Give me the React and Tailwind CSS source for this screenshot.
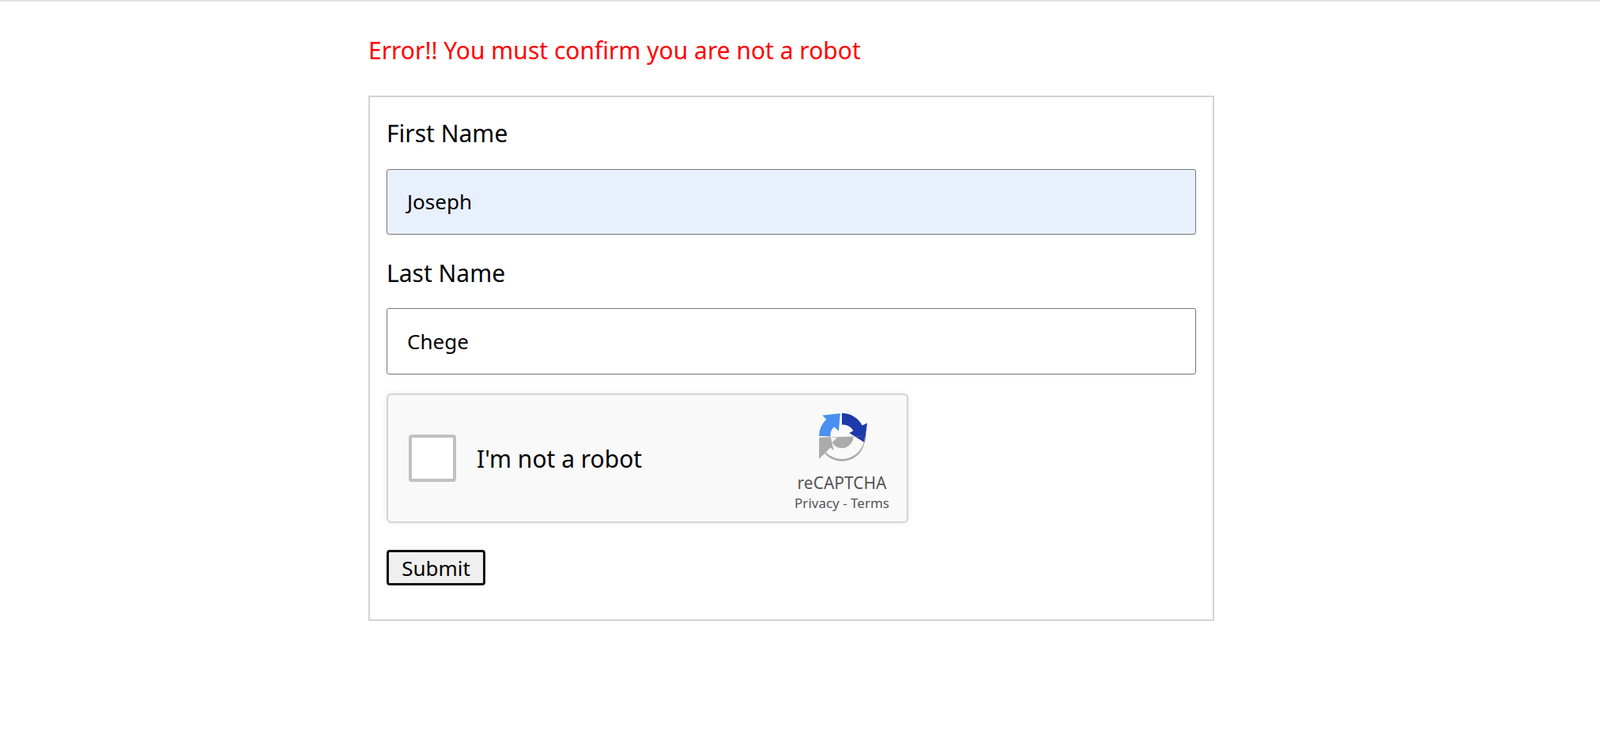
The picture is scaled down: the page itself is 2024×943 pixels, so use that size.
export default function App() {
  const sans = { fontFamily: '"Noto Sans", "Open Sans", sans-serif' };
  return (
    <div className="min-h-[943px] bg-white border-t-2 border-[#e5e5e5]">
      <div className="ml-[466px] w-[1070px] pt-[42px]">
        <div className="text-[30px] leading-[40px] text-[#ff0000]" style={sans}>
          Error!! You must confirm you are not a robot
        </div>
        <div className="mt-[37px] border-2 border-[#d3d3d3] px-[21px] pt-[26px] pb-[43px]">
          <div className="text-[30px] leading-[40px] text-black" style={sans}>First Name</div>
          <div className="mt-[25px] h-[83px] rounded-[3px] border border-[#767676] bg-[#e8f0fe] flex items-center pl-[25px] text-[26px] text-black font-['Liberation_Sans',Arial,sans-serif]">
            Joseph
          </div>
          <div className="mt-[29px] text-[30px] leading-[40px] text-black" style={sans}>Last Name</div>
          <div className="mt-[24px] h-[84px] rounded-[3px] border border-[#767676] bg-white flex items-center pl-[25px] text-[26px] text-black font-['Liberation_Sans',Arial,sans-serif]">
            Chege
          </div>
          <div className="mt-[24px] w-[660px] h-[164px] rounded-[6px] border-2 border-[#d3d3d3] bg-[#f9f9f9] shadow-[0_0_8px_rgba(0,0,0,0.08)] flex items-center font-['Roboto',sans-serif]">
            <div className="ml-[26px] w-[60px] h-[60px] rounded-[4px] border-[4px] border-[#c1c1c1] bg-white"></div>
            <div className="ml-[26px] text-[30px] text-black">I'm not a robot</div>
            <div className="ml-auto mr-[22px] flex flex-col items-center pt-[6px]">
              <svg width="66" height="66" viewBox="0 0 64 64">
                <path d="M32 4 A28 28 0 0 0 4 32 L18 32 A14 14 0 0 1 24 20.5 L30 27 L31 5 L10 8 L15 13" fill="none" stroke="none" />
                <path d="M4 32 A28 28 0 0 1 13 11.5 L8 6.5 L30 4 L28 26 L22.5 20.5 A14 14 0 0 0 18 32 Z" fill="#4a90f2" />
                <path d="M32 4 A28 28 0 0 1 57 19 L63 16 L60 40 L41 28 L46 25.5 A14 14 0 0 0 32 18 Z" fill="#1c3aa9" />
                <path d="M60 32 A28 28 0 0 1 4 32 L4 60 L18 46 L22 50 L18 32 L4 34 L9 39 L4 34 M46 32 A14 14 0 0 1 20 40 L26 34 L4 34 L4 58 L10 52 A28 28 0 0 0 60 32 Z" fill="#ababab" />
              </svg>
              <div className="mt-[14px] text-[21px] leading-[24px] text-[#555]">reCAPTCHA</div>
              <div className="mt-[4px] text-[17px] leading-[20px] text-[#555]">Privacy - Terms</div>
            </div>
          </div>
          <button className="mt-[34px] w-[125px] h-[45px] rounded-[4px] border-[3px] border-[#101010] bg-[#efefef] text-[26px] leading-none text-black font-['Liberation_Sans',Arial,sans-serif]">
            Submit
          </button>
        </div>
      </div>
    </div>
  );
}
